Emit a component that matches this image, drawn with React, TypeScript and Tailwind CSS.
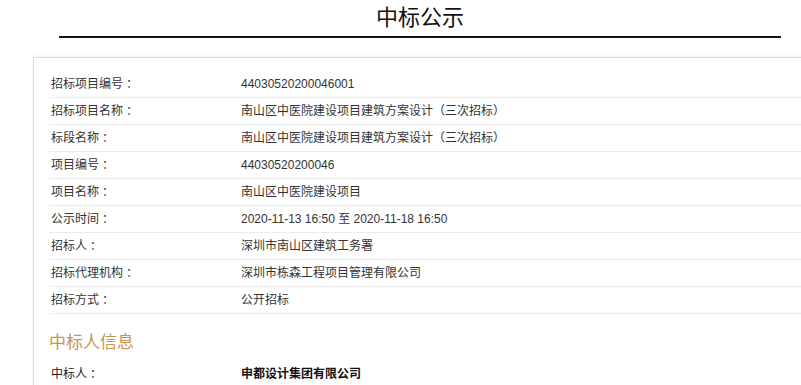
import React from "react";

const rows: [string, string][] = [
  ["招标项目编号", "44030520200046001"],
  ["招标项目名称", "南山区中医院建设项目建筑方案设计（三次招标）"],
  ["标段名称", "南山区中医院建设项目建筑方案设计（三次招标）"],
  ["项目编号", "44030520200046"],
  ["项目名称", "南山区中医院建设项目"],
  ["公示时间", "2020-11-13 16:50 至 2020-11-18 16:50"],
  ["招标人", "深圳市南山区建筑工务署"],
  ["招标代理机构", "深圳市栋森工程项目管理有限公司"],
  ["招标方式", "公开招标"],
];

export default function App() {
  return (
    <div
      className="w-[801px] h-[385px] overflow-hidden bg-white text-[#333]"
      style={{ fontFamily: '"Liberation Sans", "Noto Sans CJK SC", sans-serif' }}
    >
      <div className="ml-[59px] w-[722px]">
        <div className="h-[36px] flex items-center justify-center text-[22px] text-[#111] leading-none">
          中标公示
        </div>
        <div className="h-[2px] bg-[#111]" />
      </div>
      <div className="mt-[19px] ml-[33px] w-[790px] h-[400px] border border-[#dcdcdc] shadow-[0_-3px_4px_rgba(0,0,0,0.03)] pl-[15px] pt-[13px]">
        {rows.map(([k, v]) => (
          <div
            key={k}
            className="flex items-center h-[27px] border-b border-[#ebebeb] text-[12px]"
          >
            <div className="w-[192px] pl-[2px] text-[#333]">
              {k}
              <span className="ml-[3px]">：</span>
            </div>
            <div className="text-[#333]">{v}</div>
          </div>
        ))}
        <div className="h-[55px] flex items-center pt-[3px] text-[17px] text-[#c9954f]">
          中标人信息
        </div>
        <div className="flex items-center h-[20px] text-[12px] -mt-[5px]">
          <div className="w-[192px] pl-[2px] text-[#222]">
            中标人<span className="ml-[3px]">：</span>
          </div>
          <div className="font-bold text-[#111]">申都设计集团有限公司</div>
        </div>
      </div>
    </div>
  );
}
